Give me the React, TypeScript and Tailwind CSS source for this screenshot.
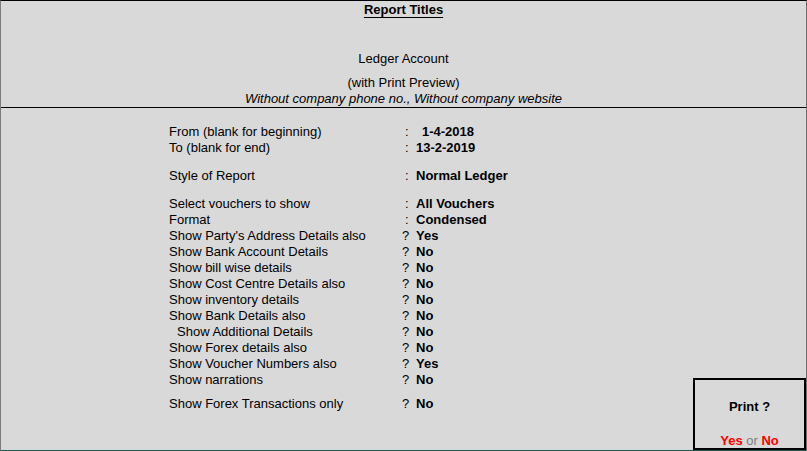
import React from 'react';

type Row = {
  label: string;
  sep: ':' | '?';
  value: string;
  gapBefore?: number;
  indent?: boolean;
  valuePad?: boolean;
};

const rows: Row[] = [
  { label: 'From (blank for beginning)', sep: ':', value: '1-4-2018', valuePad: true },
  { label: 'To (blank for end)', sep: ':', value: '13-2-2019' },
  { label: 'Style of Report', sep: ':', value: 'Normal Ledger', gapBefore: 12 },
  { label: 'Select vouchers to show', sep: ':', value: 'All Vouchers', gapBefore: 12 },
  { label: 'Format', sep: ':', value: 'Condensed' },
  { label: "Show Party's Address Details also", sep: '?', value: 'Yes' },
  { label: 'Show Bank Account Details', sep: '?', value: 'No' },
  { label: 'Show bill wise details', sep: '?', value: 'No' },
  { label: 'Show Cost Centre Details also', sep: '?', value: 'No' },
  { label: 'Show inventory details', sep: '?', value: 'No' },
  { label: 'Show Bank Details also', sep: '?', value: 'No' },
  { label: 'Show Additional Details', sep: '?', value: 'No', indent: true },
  { label: 'Show Forex details also', sep: '?', value: 'No' },
  { label: 'Show Voucher Numbers also', sep: '?', value: 'Yes' },
  { label: 'Show narrations', sep: '?', value: 'No' },
  { label: 'Show Forex Transactions only', sep: '?', value: 'No', gapBefore: 8 },
];

export default function App() {
  return (
    <div
      className="relative w-[807px] h-[451px] bg-[#d9d9d9] text-black text-[13px] border-t border-t-black border-l border-l-[#7c7c7c] border-r border-r-[#6f6f6f] border-b border-b-[#1a5c4e] flex flex-col overflow-hidden"
      style={{ fontFamily: '"Liberation Sans", Arial, sans-serif' }}
    >
      {/* Header */}
      <div className="h-[105px] box-content border-b border-black flex flex-col items-center shrink-0 pt-[1px]">
        <div className="leading-[16px] font-bold underline underline-offset-[3px]">Report Titles</div>
        <div className="leading-[16px] mt-[33px]">Ledger Account</div>
        <div className="leading-[16px] mt-[8px]">(with Print Preview)</div>
        <div className="leading-[15px] italic">Without company phone no., Without company website</div>
      </div>

      {/* Options */}
      <div className="pt-[16px] pl-[168px] flex flex-col">
        {rows.map((r) => (
          <div
            key={r.label}
            className="flex leading-[16px] h-[16px]"
            style={r.gapBefore ? { marginTop: r.gapBefore } : undefined}
          >
            <span className={`w-[232px] whitespace-pre ${r.indent ? 'pl-[8px]' : ''}`}>{r.label}</span>
            <span className={`w-[15px] ${r.sep === ':' ? 'pl-[4px]' : 'pl-[1px]'}`}>{r.sep}</span>
            <span className={`font-bold ${r.valuePad ? 'pl-[6px]' : ''}`}>{r.value}</span>
          </div>
        ))}
      </div>

      {/* Print prompt */}
      <div className="absolute right-0 bottom-0 w-[113px] h-[72px] border-2 border-black flex flex-col items-center pt-[19px]">
        <div className="leading-[16px] font-bold">Print ?</div>
        <div className="leading-[15px] mt-[18px] font-bold">
          <span className="text-[#ff0000]">Yes</span>
          <span className="font-normal text-[#808080]"> or </span>
          <span className="text-[#ff0000]">No</span>
        </div>
      </div>
    </div>
  );
}
